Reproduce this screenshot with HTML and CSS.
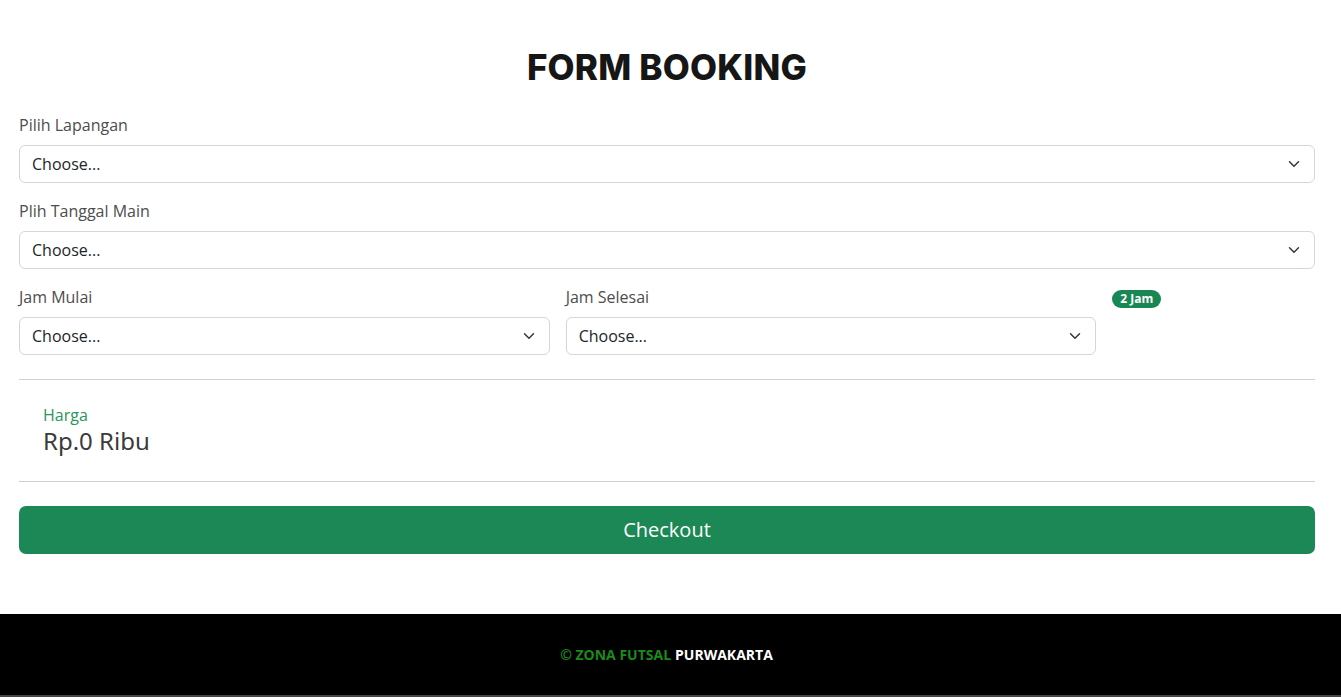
FILE: index.html
```html
<!DOCTYPE html>
<html lang="id">
<head>
<meta charset="utf-8">
<title>Form Booking</title>
<link rel="stylesheet" href="styles.css">
</head>
<body>
<main class="page">
  <h1 class="title">FORM BOOKING</h1>
  <div class="field">
    <label class="label">Pilih Lapangan</label>
    <select class="select"><option>Choose...</option></select>
  </div>
  <div class="field">
    <label class="label">Plih Tanggal Main</label>
    <select class="select"><option>Choose...</option></select>
  </div>
  <div class="row">
    <div class="col col-5">
      <label class="label">Jam Mulai</label>
      <select class="select"><option>Choose...</option></select>
    </div>
    <div class="col col-5">
      <label class="label">Jam Selesai</label>
      <select class="select"><option>Choose...</option></select>
    </div>
    <div class="col col-2">
      <span class="badge">2 Jam</span>
    </div>
  </div>
  <hr class="divider">
  <div class="price">
    <div class="price-label">Harga</div>
    <div class="price-value">Rp.0 Ribu</div>
  </div>
  <hr class="divider divider-bottom">
  <button class="btn-checkout" type="button">Checkout</button>
</main>
<footer class="footer">
  <span class="brand">© ZONA FUTSAL</span> <span class="city">PURWAKARTA</span>
</footer>
</body>
</html>
```
FILE: styles.css
```css
* { box-sizing: border-box; }
html, body { margin: 0; padding: 0; }
body {
  font-family: "Open Sans", "Noto Sans", sans-serif;
  font-size: 16px;
  line-height: 24px;
  color: #212529;
  background: #fff;
}
.page {
  padding: 45px 26px 60px 19px;
}
.title {
  margin: 0 0 24px;
  text-align: center;
  font-family: Inter, "Open Sans", sans-serif;
  font-weight: 800;
  font-size: 35px;
  line-height: 44px;
  letter-spacing: 0.2px;
  color: #161616;
}
.field { margin-bottom: 16px; }
.label {
  display: block;
  margin-bottom: 8px;
  color: #4d4d4d;
  font-size: 16px;
  line-height: 24px;
}
.select {
  display: block;
  width: 100%;
  height: 38px;
  padding: 6px 36px 6px 12px;
  font-family: "Open Sans", "Noto Sans", sans-serif;
  font-size: 16px;
  line-height: 24px;
  color: #212529;
  background-color: #fff;
  background-image: url("data:image/svg+xml,%3csvg xmlns='http://www.w3.org/2000/svg' viewBox='0 0 16 16'%3e%3cpath fill='none' stroke='%23343a40' stroke-linecap='round' stroke-linejoin='round' stroke-width='2' d='m2 5 6 6 6-6'/%3e%3c/svg%3e");
  background-repeat: no-repeat;
  background-position: right 12px center;
  background-size: 16px 12px;
  border: 1px solid #d4d6d9;
  border-radius: 6px;
  appearance: none;
  -webkit-appearance: none;
}
.row {
  display: flex;
  margin: 0 -8px;
}
.col { padding: 0 8px; }
.col-5 { flex: 0 0 41.6667%; max-width: 41.6667%; }
.col-2 { flex: 0 0 16.6667%; max-width: 16.6667%; padding-top: 0; }
.badge {
  display: inline-block;
  padding: 3px 8px;
  font-size: 12px;
  font-weight: 700;
  line-height: 12px;
  color: #fff;
  background: #198754;
  border-radius: 10px;
}
.divider {
  margin: 24px 0 0;
  border: 0;
  border-top: 1px solid #d0d0d0;
}
.divider-bottom { margin: 0 0 24px; }
.price {
  padding: 24px 24px 25px;
}
.price-label {
  color: #2b9261;
  font-size: 16px;
  line-height: 22px;
}
.price-value {
  color: #3a3a3a;
  font-size: 24px;
  line-height: 30px;
  font-family: "Noto Sans", "Open Sans", sans-serif;
}
.btn-checkout {
  display: block;
  width: 100%;
  height: 48px;
  border: 0;
  border-radius: 7px;
  background: #1b8856;
  color: #fff;
  font-family: "Open Sans", "Noto Sans", sans-serif;
  font-size: 20px;
  line-height: 28px;
}
.footer {
  background: #000;
  height: 83px;
  border-bottom: 2px solid #444;
  display: flex;
  align-items: center;
  justify-content: center;
  gap: 4px;
  padding-right: 8px;
  font-size: 14px;
  font-weight: 700;
}
.brand { color: #1b8a1b; }
.city { color: #fff; }
```
